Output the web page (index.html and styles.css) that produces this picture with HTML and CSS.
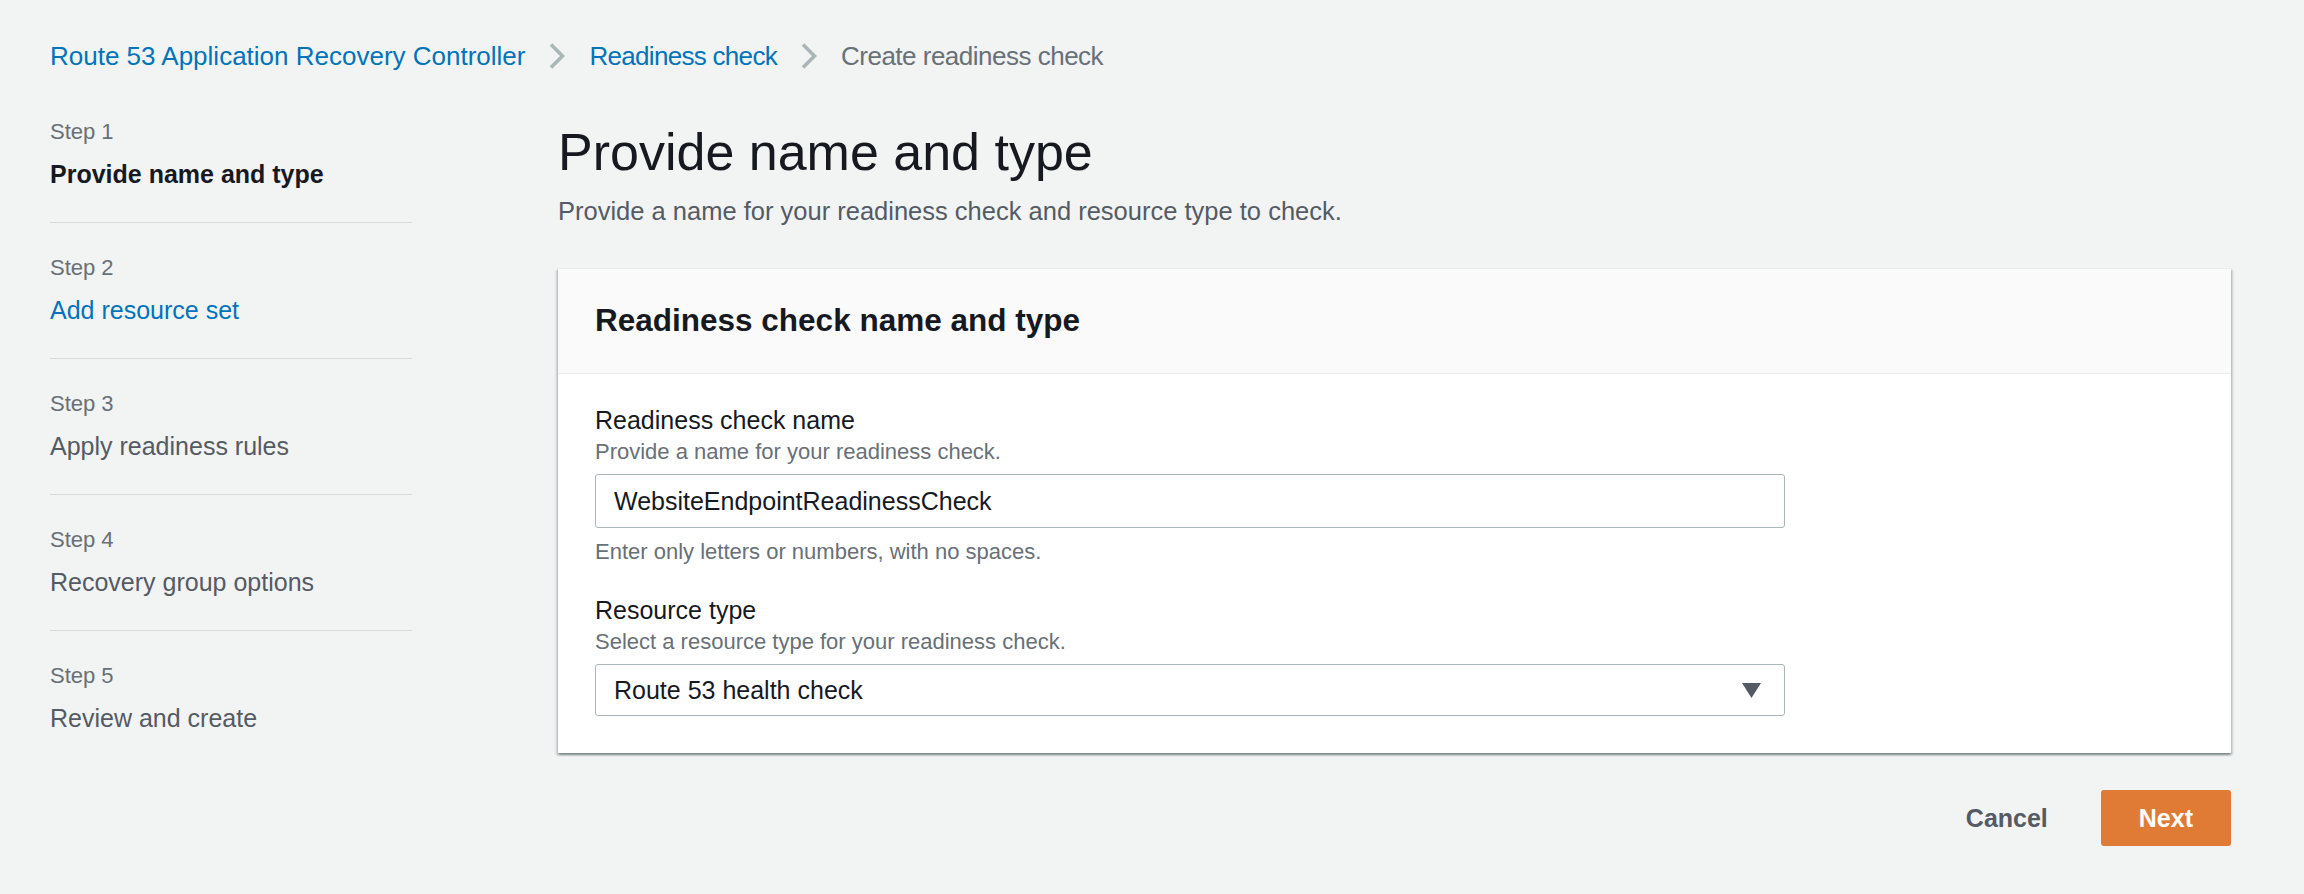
FILE: index.html
```html
<!DOCTYPE html>
<html lang="en">
<head>
<meta charset="utf-8">
<title>Create readiness check</title>
<link rel="stylesheet" href="styles.css">
</head>
<body>
<div class="page">
  <nav class="breadcrumbs">
    <a class="crumb-link" href="#">Route 53 Application Recovery Controller</a>
    <svg class="crumb-sep" width="16" height="26" viewBox="0 0 16 26"><path d="M2 1.5 L13.5 13 L2 24.5" fill="none" stroke="#aab7b8" stroke-width="3.6"/></svg>
    <a class="crumb-link tight" href="#">Readiness check</a>
    <svg class="crumb-sep" width="16" height="26" viewBox="0 0 16 26"><path d="M2 1.5 L13.5 13 L2 24.5" fill="none" stroke="#aab7b8" stroke-width="3.6"/></svg>
    <span class="crumb-current">Create readiness check</span>
  </nav>

  <div class="layout">
    <aside class="steps">
      <div class="step">
        <div class="step-label">Step 1</div>
        <div class="step-title current">Provide name and type</div>
      </div>
      <div class="step">
        <div class="step-label">Step 2</div>
        <a class="step-title link" href="#">Add resource set</a>
      </div>
      <div class="step">
        <div class="step-label">Step 3</div>
        <div class="step-title">Apply readiness rules</div>
      </div>
      <div class="step">
        <div class="step-label">Step 4</div>
        <div class="step-title">Recovery group options</div>
      </div>
      <div class="step last">
        <div class="step-label">Step 5</div>
        <div class="step-title">Review and create</div>
      </div>
    </aside>

    <main class="main">
      <h1 class="title">Provide name and type</h1>
      <p class="subtitle">Provide a name for your readiness check and resource type to check.</p>

      <section class="container">
        <div class="container-header">
          <h2>Readiness check name and type</h2>
        </div>
        <div class="container-body">
          <div class="field">
            <div class="field-label">Readiness check name</div>
            <div class="field-desc">Provide a name for your readiness check.</div>
            <div class="input">WebsiteEndpointReadinessCheck</div>
            <div class="field-hint">Enter only letters or numbers, with no spaces.</div>
          </div>
          <div class="field second">
            <div class="field-label">Resource type</div>
            <div class="field-desc">Select a resource type for your readiness check.</div>
            <div class="select">
              <span>Route 53 health check</span>
              <svg class="caret" width="19" height="15" viewBox="0 0 19 15"><path d="M0 0 H19 L9.5 15 Z" fill="#545b64"/></svg>
            </div>
          </div>
        </div>
      </section>

      <div class="actions">
        <button class="btn btn-link">Cancel</button>
        <button class="btn btn-primary">Next</button>
      </div>
    </main>
  </div>
</div>
</body>
</html>
```

FILE: styles.css
```css
html, body {
  margin: 0;
  padding: 0;
  background: #f2f3f3;
}
body {
  font-family: "Liberation Sans", Arial, sans-serif;
  color: #16191f;
}
.page {
  padding: 38px 73px 0 50px;
}
.breadcrumbs {
  display: flex;
  align-items: center;
  font-size: 26px;
  line-height: 36px;
  height: 36px;
}
.crumb-link {
  color: #0073bb;
  text-decoration: none;
}
.crumb-link.tight {
  letter-spacing: -0.7px;
}
.crumb-sep {
  margin: 0 24px;
  flex: none;
}
.crumb-current {
  color: #687078;
  letter-spacing: -0.5px;
}
.layout {
  display: flex;
  gap: 146px;
  margin-top: 43px;
}
.steps {
  width: 362px;
  flex: none;
}
.step {
  padding: 30px 0;
  border-bottom: 1px solid #d5dbdb;
}
.step:first-child {
  padding-top: 0;
}
.step.last {
  border-bottom: none;
}
.step-label {
  font-size: 22px;
  line-height: 30px;
  color: #687078;
  margin-bottom: 9px;
}
.step-title {
  display: block;
  font-size: 25px;
  line-height: 36px;
  color: #545b64;
  text-decoration: none;
}
.step-title.current {
  font-weight: bold;
  color: #16191f;
}
.step-title.link {
  color: #0073bb;
}
.main {
  flex: 1;
  min-width: 0;
}
.title {
  margin: 3px 0 0;
  font-size: 52px;
  line-height: 64px;
  font-weight: normal;
  color: #16191f;
}
.subtitle {
  margin: 9px 0 0;
  font-size: 25.5px;
  line-height: 36px;
  color: #545b64;
}
.container {
  margin-top: 39px;
  background: #fff;
  border-top: 1px solid #eaeded;
  box-shadow: 0 2px 2px 0 rgba(0, 28, 36, 0.3), 2px 2px 2px 0 rgba(0, 28, 36, 0.15), -2px 2px 2px 0 rgba(0, 28, 36, 0.15);
}
.container-header {
  background: #fafafa;
  border-bottom: 1px solid #eaeded;
  padding: 31px 37px 33px;
}
.container-header h2 {
  margin: 0;
  font-size: 31.5px;
  line-height: 40px;
  font-weight: bold;
  color: #16191f;
}
.container-body {
  padding: 29px 37px 37px;
}
.field.second {
  margin-top: 26px;
}
.field-label {
  font-size: 25px;
  line-height: 34px;
  color: #16191f;
}
.field-desc,
.field-hint {
  font-size: 22px;
  line-height: 30px;
  color: #687078;
}
.field-hint {
  margin-top: 9px;
}
.input,
.select {
  box-sizing: border-box;
  width: 1190px;
  margin-top: 7px;
  border: 1px solid #aab7b8;
  border-radius: 3px;
  background: #fff;
  display: flex;
  align-items: center;
  padding: 0 23px 0 18px;
  font-size: 25px;
  color: #16191f;
}
.input {
  height: 54px;
}
.select {
  height: 52px;
  justify-content: space-between;
}
.caret {
  flex: none;
}
.actions {
  display: flex;
  justify-content: flex-end;
  gap: 15px;
  margin-top: 37px;
}
.btn {
  height: 56px;
  padding: 0 38px;
  border: none;
  border-radius: 3px;
  font-family: "Liberation Sans", Arial, sans-serif;
  font-size: 25px;
  font-weight: bold;
  cursor: pointer;
}
.btn-link {
  background: transparent;
  color: #545b64;
}
.btn-primary {
  background: #df7b34;
  color: #fff;
}
```
